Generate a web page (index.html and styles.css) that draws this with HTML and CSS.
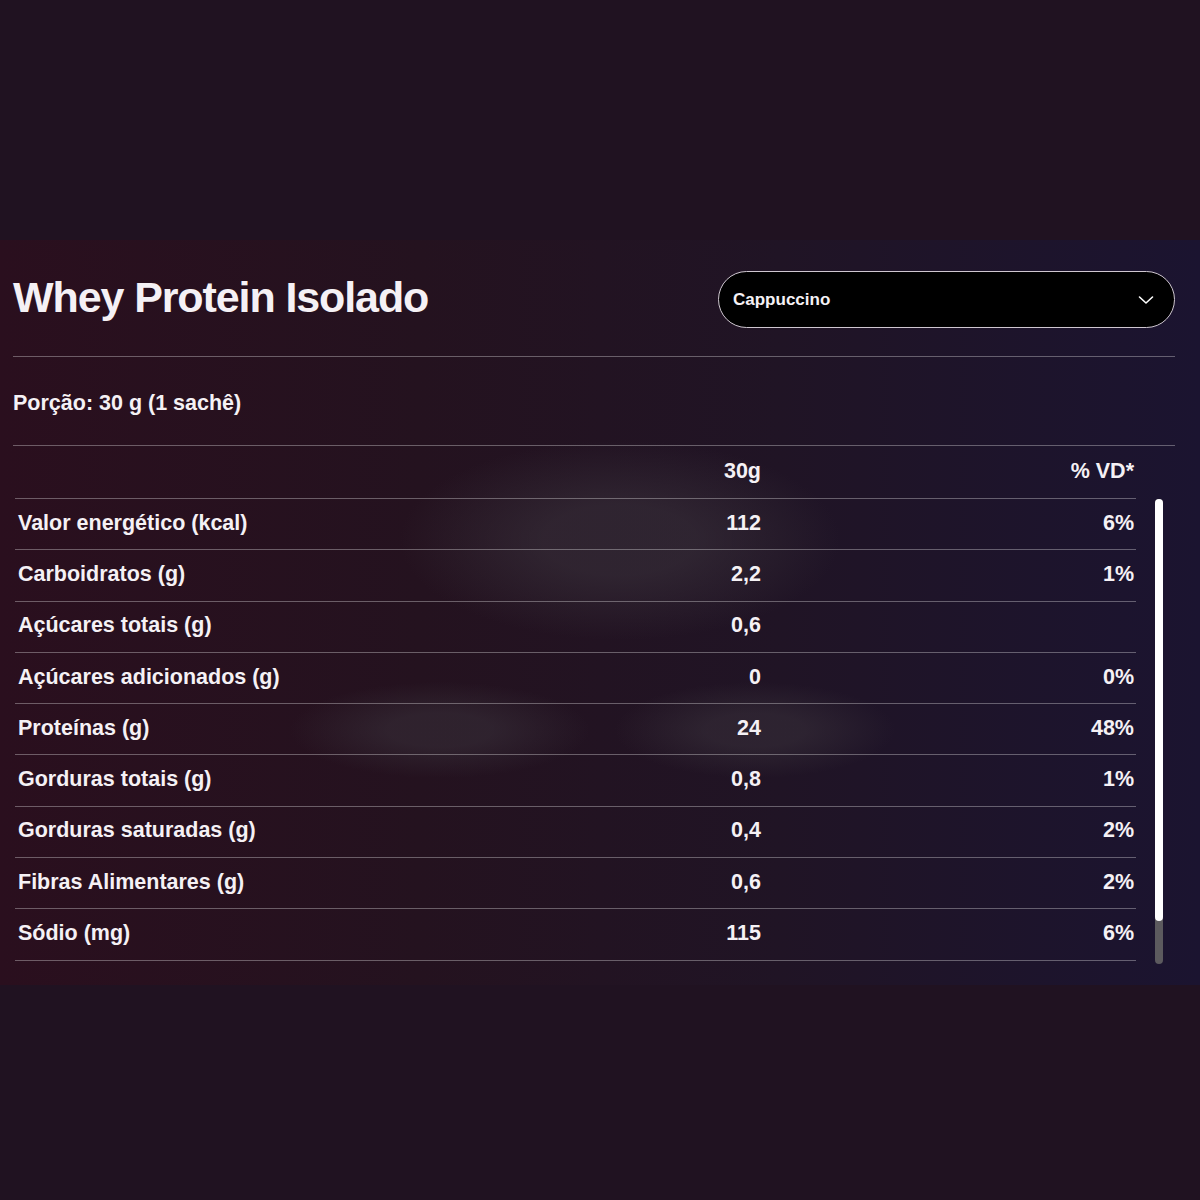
FILE: index.html
```html
<!DOCTYPE html>
<html lang="pt-BR">
<head>
  <meta charset="UTF-8">
  <meta name="viewport" content="width=device-width, initial-scale=1.0">
  <title>Whey Protein Isolado - Tabela Nutricional</title>
  <link rel="stylesheet" href="styles.css">
</head>
<body>

  <section class="panel">
    <div class="head">
      <h1 class="title">Whey Protein Isolado</h1>
      <div class="select">
        <span>Cappuccino</span>
        <svg class="chevron" width="16" height="10" viewBox="0 0 16 10">
          <path d="M1.5 2 L8 8 L14.5 2" fill="none" stroke="#ffffff" stroke-width="1.6" stroke-linecap="round" stroke-linejoin="round"/>
        </svg>
      </div>
    </div>

    <div class="portion">Porção: 30 g (1 sachê)</div>

    <div class="table">
      <div class="table-main">
        <div class="row row-head">
          <span></span>
          <span class="num">30g</span>
          <span class="num">% VD*</span>
        </div>
        <div class="rows">
          <div class="row"><span>Valor energético (kcal)</span><span class="num">112</span><span class="num">6%</span></div>
          <div class="row"><span>Carboidratos (g)</span><span class="num">2,2</span><span class="num">1%</span></div>
          <div class="row"><span>Açúcares totais (g)</span><span class="num">0,6</span><span class="num"></span></div>
          <div class="row"><span>Açúcares adicionados (g)</span><span class="num">0</span><span class="num">0%</span></div>
          <div class="row"><span>Proteínas (g)</span><span class="num">24</span><span class="num">48%</span></div>
          <div class="row"><span>Gorduras totais (g)</span><span class="num">0,8</span><span class="num">1%</span></div>
          <div class="row"><span>Gorduras saturadas (g)</span><span class="num">0,4</span><span class="num">2%</span></div>
          <div class="row"><span>Fibras Alimentares (g)</span><span class="num">0,6</span><span class="num">2%</span></div>
          <div class="row"><span>Sódio (mg)</span><span class="num">115</span><span class="num">6%</span></div>
        </div>
      </div>
      <div class="scrollbar"><div class="thumb"></div></div>
    </div>
  </section>

</body>
</html>
```

FILE: styles.css
```css
body {
  margin: 0;
  background-color: #201221;
  font-family: "Liberation Sans", Arial, sans-serif;
  font-weight: 700;
  color: #f5f1f5;
}

.panel {
  margin-top: 240px;
  height: 745px;
  box-sizing: border-box;
  padding: 31px 25px 0 13px;
  background:
    radial-gradient(ellipse 220px 100px at 620px 300px, rgba(58, 50, 60, 0.55) 35%, transparent 100%),
    radial-gradient(ellipse 150px 48px at 440px 490px, rgba(58, 50, 60, 0.5) 35%, transparent 100%),
    radial-gradient(ellipse 140px 48px at 755px 490px, rgba(58, 50, 60, 0.5) 35%, transparent 100%),
    linear-gradient(90deg, #2a0f1e 0%, #24121f 35%, #201425 65%, #1b1430 100%);
}

/* Header */
.head {
  display: flex;
  justify-content: space-between;
  align-items: center;
  padding-bottom: 28px;
  border-bottom: 1px solid rgba(255, 255, 255, 0.32);
}

.title {
  margin: -4px 0 0;
  font-size: 43px;
  line-height: 57px;
  letter-spacing: -1.1px;
  font-weight: 700;
}

.select {
  width: 457px;
  height: 57px;
  box-sizing: border-box;
  display: flex;
  align-items: center;
  justify-content: space-between;
  padding: 0 20px 0 14px;
  background-color: #000;
  border: 1.5px solid #cfc7d0;
  border-radius: 29px;
  font-size: 17px;
}

.chevron {
  display: block;
}

.portion {
  padding: 34px 0 30px;
  line-height: 24px;
  font-size: 21.5px;
  border-bottom: 1px solid rgba(255, 255, 255, 0.32);
}

/* Table */
.table {
  display: flex;
  margin-left: 2px;
}

.table-main {
  width: 1121px;
}

.row {
  display: grid;
  grid-template-columns: 1fr 120px 373px;
  align-items: center;
  height: 50.3px;
  padding: 0 2px 2px 3px;
  box-sizing: border-box;
  border-bottom: 1px solid rgba(255, 255, 255, 0.32);
  font-size: 21.5px;
}

.rows .row {
  height: 51.3px;
}

.row-head {
  height: 53px;
}

.num {
  text-align: right;
}

.scrollbar {
  width: 8px;
  height: 465px;
  margin: 53px 0 0 19px;
  border-radius: 4px;
  background-color: #5c5a5e;
}

.thumb {
  height: 422px;
  border-radius: 4px;
  background-color: #ffffff;
}
```
